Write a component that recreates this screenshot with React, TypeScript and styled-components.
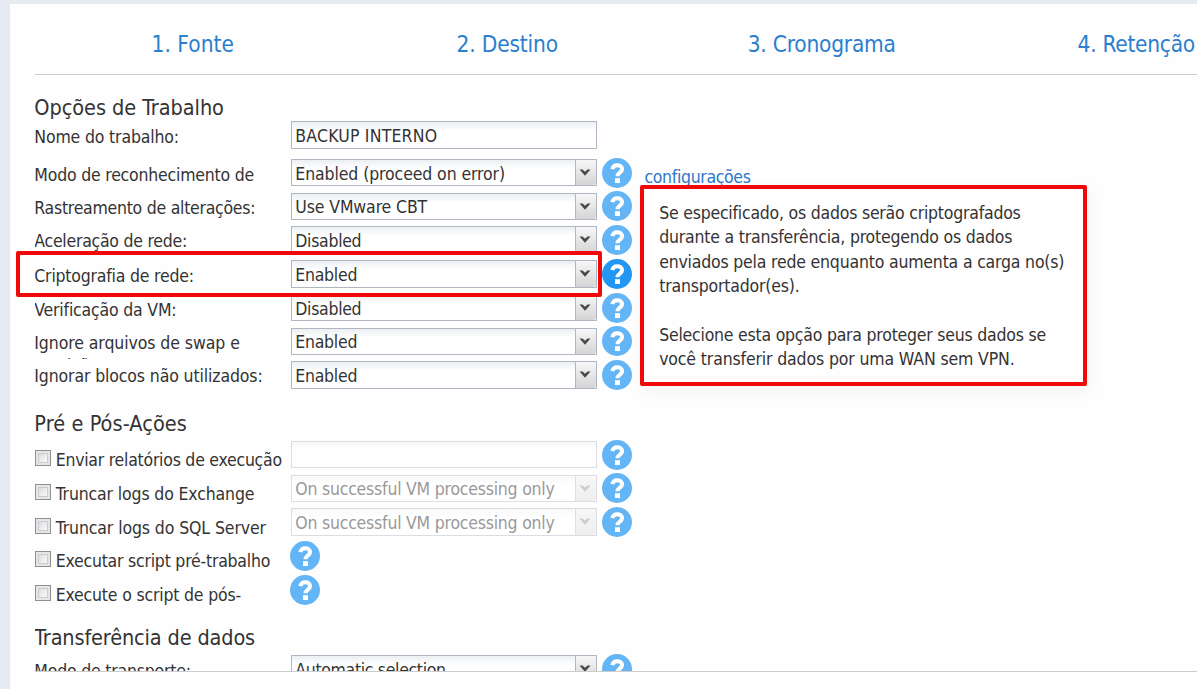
import React from 'react';
import styled, { createGlobalStyle, css } from 'styled-components';

const GlobalStyle = createGlobalStyle`
  * { box-sizing: border-box; }
  body {
    margin: 0;
    overflow: hidden;
    background: #e6eaf3;
    color: #333;
    font: 17.5px/22px 'DejaVu Sans Condensed', 'DejaVu Sans', sans-serif;
    font-kerning: normal;
  }
`;

const Page = styled.div`
  position: relative;
  display: flex;
  height: 689px;
  padding: 4px 0 0 10px;
  overflow: hidden;
`;

const Panel = styled.main`
  flex: 1;
  min-width: 0;
  padding-left: 25px;
  background: #fefefe;
`;

const Steps = styled.nav`
  display: flex;
  height: 71px;
  border-bottom: 1px solid #ccc;
  overflow: hidden;
`;

const Step = styled.a<{ $track: number }>`
  flex: 0 0 314.5px;
  padding: 26px 0 0 1px;
  text-align: center;
  white-space: nowrap;
  font-size: 22.5px;
  line-height: 28px;
  letter-spacing: ${(p) => p.$track}px;
  color: #2a7fcf;
`;

const Scroller = styled.div`
  height: 597px;
  border-bottom: 1px solid #ccc;
  overflow: hidden;
`;

const Heading = styled.h2<{ $height: number; $top: number; $track: number }>`
  height: ${(p) => p.$height}px;
  margin: 0;
  padding-top: ${(p) => p.$top}px;
  text-indent: -0.7px;
  font-size: 21.5px;
  line-height: 26px;
  font-weight: 400;
  letter-spacing: ${(p) => p.$track}px;
`;

const Row = styled.div<{ $height: number }>`
  display: flex;
  align-items: flex-start;
  height: ${(p) => p.$height}px;
`;

const Label = styled.label<{ $track: number; $offset?: number }>`
  flex: 0 0 256px;
  height: 27px;
  margin-top: ${(p) => p.$offset ?? 6}px;
  overflow: hidden;
  text-indent: -0.7px;
  line-height: 23px;
  white-space: pre;
  letter-spacing: ${(p) => p.$track}px;
`;

const CheckLabel = styled.label<{ $track: number; $top: number }>`
  display: flex;
  flex: 0 0 256px;
  gap: 4.7px;
  padding-top: ${(p) => p.$top}px;
  white-space: nowrap;
  letter-spacing: ${(p) => p.$track}px;
`;

const CheckBox = styled.span`
  flex: none;
  width: 16px;
  height: 16px;
  margin-top: 1px;
  border: 1px solid #8e8f8f;
  background: linear-gradient(135deg, #cfd2d6, #f8f8f8 75%);
  box-shadow: inset 0 0 0 2px #e6e6e6, inset 0 0 0 3px #c9ccd0;
`;

const Field = styled.div<{ $top: number; $height: number; $track: number; $disabled?: boolean }>`
  display: flex;
  justify-content: space-between;
  flex: 0 0 306px;
  height: ${(p) => p.$height}px;
  margin-top: ${(p) => p.$top}px;
  padding-left: 3.3px;
  border: 1px solid #b2b5c2;
  background: linear-gradient(#eceff2, #fff 9px);
  line-height: ${(p) => (p.$top === 2 ? 26 : 28)}px;
  white-space: nowrap;
  letter-spacing: ${(p) => p.$track}px;
  ${(p) =>
    p.$disabled &&
    css`
      border-color: #dcdde2;
      color: #999;
      background: linear-gradient(#f7f8f9, #fff 9px);
    `}
`;

const Trigger = styled.span<{ $disabled?: boolean }>`
  display: flex;
  justify-content: center;
  width: 21px;
  padding: 9px 2px 0 0;
  border-left: 1px solid ${(p) => (p.$disabled ? '#e0e0e3' : '#b2b5c2')};
  border-radius: 0 3px 3px 0;
  background: ${(p) =>
    p.$disabled ? 'linear-gradient(#f8f8f8, #eee)' : 'linear-gradient(#f7f7f7, #e6e6e6 50%, #d4d4d4)'};
  color: ${(p) => (p.$disabled ? '#ccc' : '#484848')};
`;

const HelpButton = styled.span<{ $active?: boolean; $first?: boolean }>`
  flex: none;
  width: 30px;
  height: 30px;
  margin-left: ${(p) => (p.$first ? -1 : 5)}px;
  border-radius: 50%;
  background: ${(p) => (p.$active ? '#2196f3' : '#64b5f6')};
`;

const SettingsLink = styled.a`
  margin: 7px 0 0 12.5px;
  line-height: 24px;
  letter-spacing: -0.34px;
  color: #2d77c8;
`;

const Highlight = styled.div`
  position: absolute;
  left: 16px;
  top: 251px;
  width: 586px;
  height: 46px;
  border: 4px solid #f20808;
  border-radius: 2px;
`;

const HelpPopover = styled.aside`
  position: absolute;
  left: 640px;
  top: 185px;
  width: 447px;
  height: 201px;
  padding: 12px 0 0 15.2px;
  border: 4px solid #f20808;
  border-radius: 2px;
  background: #fefefe;
  box-shadow: 3px 6px 16px rgba(0, 0, 0, 0.05);
`;

const HelpLine = styled.p<{ $track: number }>`
  height: 24.4px;
  margin: 0;
  line-height: 24.4px;
  white-space: nowrap;
  letter-spacing: ${(p) => p.$track}px;
`;

function Help({ active, first }: { active?: boolean; first?: boolean }) {
  return (
    <HelpButton $active={active} $first={first}>
      <svg width="30" height="30" viewBox="0 0 30 30" fill="none" display="block">
        <path d="M10.300 11.200C10.900 8.300 12.700 7.200 15.200 7.200c2.900 0 4.900 1.500 4.900 3.900 0 3.500-4.600 3.400-4.600 7.100" stroke="#fff" strokeWidth="4" />
        <path d="M13 20.200h5v4.800h-5z" fill="#fff" />
      </svg>
    </HelpButton>
  );
}

function Select({ value, top, height, track, disabled }: { value: string; top: number; height: number; track: number; disabled?: boolean }) {
  return (
    <Field $top={top} $height={height} $track={track} $disabled={disabled}>
      {value}
      <Trigger $disabled={disabled}>
        <svg width="12" height="8" viewBox="0 0 12 8">
          <path d="M0.500 0.600h3L6 2.800l2.500-2.200h3L6 6.800z" fill="currentColor" />
        </svg>
      </Trigger>
    </Field>
  );
}

const steps = [
  { text: '1. Fonte', track: 0.05 },
  { text: '2. Destino', track: -0.18 },
  { text: '3. Cronograma', track: -0.22 },
  { text: '4. Retenção', track: -0.27 },
];

const options = [
  { label: 'Modo de reconhecimento de', track: -0.2, value: 'Enabled (proceed on error)', vTrack: -0.1, row: 33, top: 1, height: 27, link: true },
  { label: 'Rastreamento de alterações:', track: -0.26, value: 'Use VMware CBT', vTrack: -0.12, row: 34, top: 2, height: 27 },
  { label: 'Aceleração de rede:', track: -0.25, value: 'Disabled', vTrack: -0.3, row: 34, top: 1, height: 28 },
  { label: 'Criptografia de rede:', track: -0.2, value: 'Enabled', vTrack: -0.25, row: 34, top: 1, height: 28, active: true },
  { label: 'Verificação da VM:', track: -0.18, value: 'Disabled', vTrack: -0.3, row: 33, top: 1, height: 27 },
  { label: 'Ignore arquivos de swap e\npartição:', track: -0.08, value: 'Enabled', vTrack: -0.25, row: 34, top: 2, height: 27 },
  { label: 'Ignorar blocos não utilizados:', track: -0.12, value: 'Enabled', vTrack: -0.25, row: 34, top: 1, height: 28 },
];

const actions = [
  { label: 'Enviar relatórios de execução', track: -0.24, kind: 'text', row: 33, top: 1, height: 27 },
  { label: 'Truncar logs do Exchange', track: -0.14, kind: 'select', row: 34, top: 2, height: 27 },
  { label: 'Truncar logs do SQL Server', track: -0.1, kind: 'select', row: 34, top: 1, height: 28 },
  { label: 'Executar script pré-trabalho', track: -0.22, kind: 'none', row: 34, top: 0, height: 0 },
  { label: 'Execute o script de pós-', track: -0.18, kind: 'none', row: 34, top: 0, height: 0 },
];

const helpLines = [
  { text: 'Se especificado, os dados serão criptografados', track: -0.22 },
  { text: 'durante a transferência, protegendo os dados', track: -0.2 },
  { text: 'enviados pela rede enquanto aumenta a carga no(s)', track: -0.19 },
  { text: 'transportador(es).', track: -0.18 },
  { text: '', track: 0 },
  { text: 'Selecione esta opção para proteger seus dados se', track: -0.22 },
  { text: 'você transferir dados por uma WAN sem VPN.', track: -0.14 },
];

export default function App() {
  return (
    <>
      <GlobalStyle />
      <Page>
        <Panel>
          <Steps>
            {steps.map((s) => (
              <Step key={s.text} $track={s.track}>{s.text}</Step>
            ))}
          </Steps>
          <Scroller>
            <Heading $height={46} $top={20} $track={-0.05}>Opções de Trabalho</Heading>
            <Row $height={37}>
              <Label $track={-0.16} $offset={5}>Nome do trabalho:</Label>
              <Field $top={0} $height={28} $track={0.2}>BACKUP INTERNO</Field>
            </Row>
            {options.map((o) => (
              <Row key={o.label} $height={o.row}>
                <Label $track={o.track} $offset={o.label.startsWith('Ignorar') || o.label.startsWith('Acel') ? 5 : 6}>{o.label}</Label>
                <Select value={o.value} top={o.top} height={o.height} track={o.vTrack} />
                <Help active={o.active} />
                {o.link && <SettingsLink>configurações</SettingsLink>}
              </Row>
            ))}
            <Heading $height={46} $top={17} $track={0.08}>Pré e Pós-Ações</Heading>
            {actions.map((a) => (
              <Row key={a.label} $height={a.row}>
                <CheckLabel $track={a.track} $top={a.kind === 'select' ? 10 : 9}>
                  <CheckBox />
                  {a.label}
                </CheckLabel>
                {a.kind === 'text' && <Field $top={a.top} $height={a.height} $track={0} $disabled />}
                {a.kind === 'select' && (
                  <Select value="On successful VM processing only" top={a.top} height={a.height} track={-0.22} disabled />
                )}
                <Help first={a.kind === 'none'} />
              </Row>
            ))}
            <Heading $height={45} $top={16} $track={-0.14}>Transferência de dados</Heading>
            <Row $height={34}>
              <Label $track={-0.2}>Modo de transporte:</Label>
              <Select value="Automatic selection" top={1} height={28} track={-0.32} />
              <Help />
            </Row>
          </Scroller>
        </Panel>
        <HelpPopover>
          {helpLines.map((l, i) => (
            <HelpLine key={i} $track={l.track}>{l.text}</HelpLine>
          ))}
        </HelpPopover>
        <Highlight />
      </Page>
    </>
  );
}
